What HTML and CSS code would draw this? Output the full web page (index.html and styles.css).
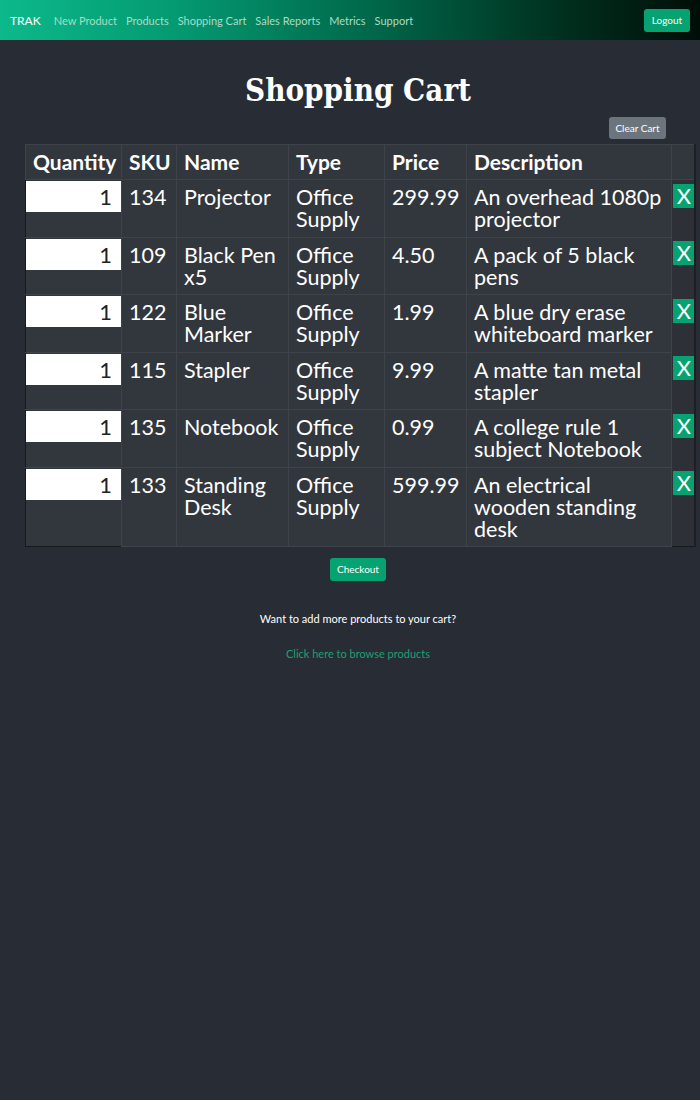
FILE: index.html
```html
<!DOCTYPE html>
<html>
<head>
<meta charset="utf-8">
<link rel="stylesheet" href="styles.css">
</head>
<body>
<nav class="navbar">
  <div class="nav-left">
    <span class="brand">TRAK</span>
    <a class="nav-link">New Product</a>
    <a class="nav-link">Products</a>
    <a class="nav-link">Shopping Cart</a>
    <a class="nav-link">Sales Reports</a>
    <a class="nav-link">Metrics</a>
    <a class="nav-link">Support</a>
  </div>
  <button class="btn btn-green btn-logout">Logout</button>
</nav>
<main class="page">
  <h1 class="title">Shopping Cart</h1>
  <div class="clear-row"><button class="btn btn-gray">Clear Cart</button></div>
  <table class="cart">
    <thead>
      <tr>
        <th class="c-qty">Quantity</th>
        <th class="c-sku">SKU</th>
        <th class="c-name">Name</th>
        <th class="c-type">Type</th>
        <th class="c-price">Price</th>
        <th class="c-desc">Description</th>
        <th class="c-x"></th>
      </tr>
    </thead>
    <tbody>
      <tr>
        <td class="qty"><div class="qty-input">1</div></td>
        <td>134</td><td>Projector</td><td>Office Supply</td><td>299.99</td><td>An overhead 1080p projector</td>
        <td class="x-cell"><span class="x-btn">X</span></td>
      </tr>
      <tr>
        <td class="qty"><div class="qty-input">1</div></td>
        <td>109</td><td>Black Pen x5</td><td>Office Supply</td><td>4.50</td><td>A pack of 5 black pens</td>
        <td class="x-cell"><span class="x-btn">X</span></td>
      </tr>
      <tr>
        <td class="qty"><div class="qty-input">1</div></td>
        <td>122</td><td>Blue Marker</td><td>Office Supply</td><td>1.99</td><td>A blue dry erase whiteboard marker</td>
        <td class="x-cell"><span class="x-btn">X</span></td>
      </tr>
      <tr>
        <td class="qty"><div class="qty-input">1</div></td>
        <td>115</td><td>Stapler</td><td>Office Supply</td><td>9.99</td><td>A matte tan metal stapler</td>
        <td class="x-cell"><span class="x-btn">X</span></td>
      </tr>
      <tr>
        <td class="qty"><div class="qty-input">1</div></td>
        <td>135</td><td>Notebook</td><td>Office Supply</td><td>0.99</td><td>A college rule 1 subject Notebook</td>
        <td class="x-cell"><span class="x-btn">X</span></td>
      </tr>
      <tr>
        <td class="qty"><div class="qty-input">1</div></td>
        <td>133</td><td>Standing Desk</td><td>Office Supply</td><td>599.99</td><td>An electrical wooden standing desk</td>
        <td class="x-cell"><span class="x-btn">X</span></td>
      </tr>
    </tbody>
  </table>
  <div class="checkout-row"><button class="btn btn-green btn-checkout">Checkout</button></div>
  <p class="more">Want to add more products to your cart?</p>
  <a class="browse">Click here to browse products</a>
</main>
</body>
</html>
```

FILE: styles.css
```css
html, body {
  margin: 0;
  padding: 0;
  background: #282c34;
  font-family: "Lato", "Open Sans", sans-serif;
  color: #ffffff;
}

.navbar {
  height: 40px;
  display: flex;
  align-items: center;
  justify-content: space-between;
  padding: 0 10px;
  box-sizing: border-box;
  background: linear-gradient(90deg, #0cb98a 0%, #049a72 25%, #006447 55%, #00301f 80%, #000e08 100%);
}

.nav-left {
  display: flex;
  align-items: center;
  gap: 9px;
}

.brand {
  font-size: 12px;
  color: #ffffff;
  margin-right: 4px;
}

.nav-link {
  font-size: 11px;
  color: #a9dcc6;
}

.btn {
  border: none;
  border-radius: 3px;
  color: #ffffff;
  font-family: "Lato", "Open Sans", sans-serif;
  font-size: 10px;
  cursor: pointer;
}

.btn-green {
  background: #06a271;
}

.btn-gray {
  background: #6c757d;
}

.btn-logout {
  width: 46px;
  height: 23px;
  padding: 0;
}

.page {
  display: flex;
  flex-direction: column;
  align-items: center;
  padding-left: 16px;
}

.title {
  margin: 30px 0 0 0;
  font-family: "DejaVu Serif Condensed", "DejaVu Serif", serif;
  font-weight: bold;
  font-size: 31px;
  line-height: 40px;
}

.clear-row {
  align-self: stretch;
  display: flex;
  justify-content: flex-end;
  padding-right: 34px;
  margin-top: 7px;
}

.btn-gray {
  width: 57px;
  height: 22px;
  padding: 0;
}

.cart {
  align-self: flex-start;
  margin: 5px 0 0 9px;
  width: 670px;
  table-layout: fixed;
  border-collapse: collapse;
  background: #32363d;
  border-left: 1px solid #16191d;
  border-right: 2px solid #1c1f24;
  border-bottom: 1px solid #16191d;
  font-size: 21.5px;
  line-height: 22px;
}

.cart th {
  font-weight: bold;
  font-size: 21px;
  text-align: left;
  padding: 6px 7px 6px 7px;
  border: 1px solid #3e4249;
  height: 22px;
}

.cart td {
  vertical-align: top;
  text-align: left;
  padding: 6px 7px 6.5px 7px;
  border: 1px solid #3e4249;
  font-weight: normal;
}

.c-qty { width: 81px; }
.c-sku { width: 40px; }
.c-name { width: 97px; }
.c-type { width: 81px; }
.c-price { width: 67px; }
.c-desc { width: 190px; }
.c-x { width: 8px; }

.cart td.qty {
  padding: 1px 0 0 0;
  border-left: none;
  border-bottom: none;
}

.qty-input {
  height: 31px;
  background: #ffffff;
  color: #222;
  text-align: right;
  padding-right: 9px;
  box-sizing: border-box;
  line-height: 31px;
  font-size: 22px;
}

.cart td.x-cell {
  padding: 4px 0 0 1px;
  border-top: none;
  border-bottom: none;
  border-right: none;
  background: #2d3137;
}

.x-btn {
  display: block;
  width: 22px;
  height: 24px;
  background: #06a271;
  color: #ffffff;
  text-align: center;
  line-height: 24px;
  font-size: 22px;
}

.checkout-row {
  margin-top: 10px;
}

.btn-checkout {
  width: 56px;
  height: 23px;
  padding: 0;
}

.more {
  margin: 31px 0 0 0;
  font-size: 11px;
  line-height: 14px;
}

.browse {
  margin-top: 21px;
  font-size: 11px;
  line-height: 14px;
  color: #1f9f73;
}
```
